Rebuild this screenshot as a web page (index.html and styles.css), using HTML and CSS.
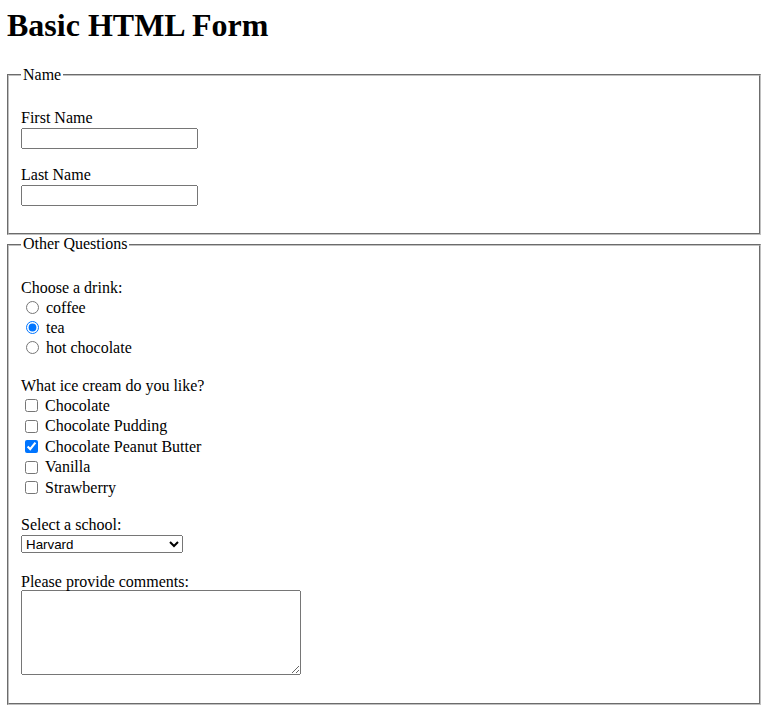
FILE: index.html
```html
<!DOCTYPE html>
<html>
<head>
<meta charset="utf-8">
<title>Basic HTML Form</title>
<link rel="stylesheet" href="styles.css">
</head>
<body class="page">
<h1 class="title">Basic HTML Form</h1>
<form class="form">
  <fieldset class="group">
    <legend class="legend">Name</legend>
    <div class="field field-first">
      <label class="label" for="first">First Name</label>
      <input class="text-input" type="text" id="first">
    </div>
    <div class="field field-next">
      <label class="label" for="last">Last Name</label>
      <input class="text-input" type="text" id="last">
    </div>
  </fieldset>
  <fieldset class="group">
    <legend class="legend">Other Questions</legend>
    <div class="question question-first">Choose a drink:</div>
    <div class="opt"><input class="radio" type="radio" name="drink" id="d1"><label for="d1">coffee</label></div>
    <div class="opt"><input class="radio" type="radio" name="drink" id="d2" checked><label for="d2">tea</label></div>
    <div class="opt"><input class="radio" type="radio" name="drink" id="d3"><label for="d3">hot chocolate</label></div>
    <div class="question question-ice">What ice cream do you like?</div>
    <div class="opt opt-check"><input class="check" type="checkbox" id="c1"><label for="c1">Chocolate</label></div>
    <div class="opt opt-check"><input class="check" type="checkbox" id="c2"><label for="c2">Chocolate Pudding</label></div>
    <div class="opt opt-check"><input class="check" type="checkbox" id="c3" checked><label for="c3">Chocolate Peanut Butter</label></div>
    <div class="opt opt-check"><input class="check" type="checkbox" id="c4"><label for="c4">Vanilla</label></div>
    <div class="opt opt-check"><input class="check" type="checkbox" id="c5"><label for="c5">Strawberry</label></div>
    <div class="question question-school"><label for="school">Select a school:</label></div>
    <select class="select" id="school">
      <option>Harvard</option>
      <option>Yale</option>
      <option>Princeton</option>
      <option>Stanford</option>
    </select>
    <div class="question question-comments"><label for="comments">Please provide comments:</label></div>
    <textarea class="comments" id="comments"></textarea>
  </fieldset>
</form>
</body>
</html>
```

FILE: styles.css
```css
.page {
  margin: 7px;
  font-family: "Liberation Serif", "Times New Roman", serif;
  font-size: 16px;
  line-height: 18.8px;
  color: #000;
  background: #fff;
}

.title {
  margin: 0 0 22px 0;
  font-size: 32px;
  line-height: normal;
  font-weight: bold;
}

.form {
  margin: 0;
}

.group {
  margin: 0;
  padding: 5.6px 12px 27.6px 12px;
  border: 2px groove #c0c0c0;
}

.legend {
  padding: 0 2px;
  line-height: 18.8px;
}

.field-first {
  margin-top: 18.4px;
}

.field-next {
  margin-top: 17.2px;
}

.label {
  display: block;
}

.text-input {
  display: block;
  box-sizing: border-box;
  width: 177px;
  height: 21px;
  margin: 0;
  font-family: "Liberation Sans", Arial, sans-serif;
  font-size: 13.33px;
}

.question-first {
  margin-top: 19.2px;
}

.question-ice {
  margin-top: 19.2px;
}

.question-school {
  margin-top: 17.7px;
}

.question-comments {
  margin-top: 19.6px;
}

.opt {
  display: flex;
  align-items: center;
  gap: 4px;
  height: 20px;
  line-height: 20px;
}

.opt-check {
  height: 20.5px;
}

.radio {
  width: 13px;
  height: 13px;
  margin: 0 3px 0 5px;
}

.check {
  width: 13px;
  height: 13px;
  margin: 0 3px 0 4px;
}

.select {
  display: block;
  box-sizing: border-box;
  width: 162px;
  height: 18px;
  margin: 0.6px 0 0 0;
  font-family: "Liberation Sans", Arial, sans-serif;
  font-size: 13.33px;
}

.comments {
  display: block;
  box-sizing: border-box;
  width: 280px;
  height: 85px;
  margin: -1px 0 0 0;
}
```
